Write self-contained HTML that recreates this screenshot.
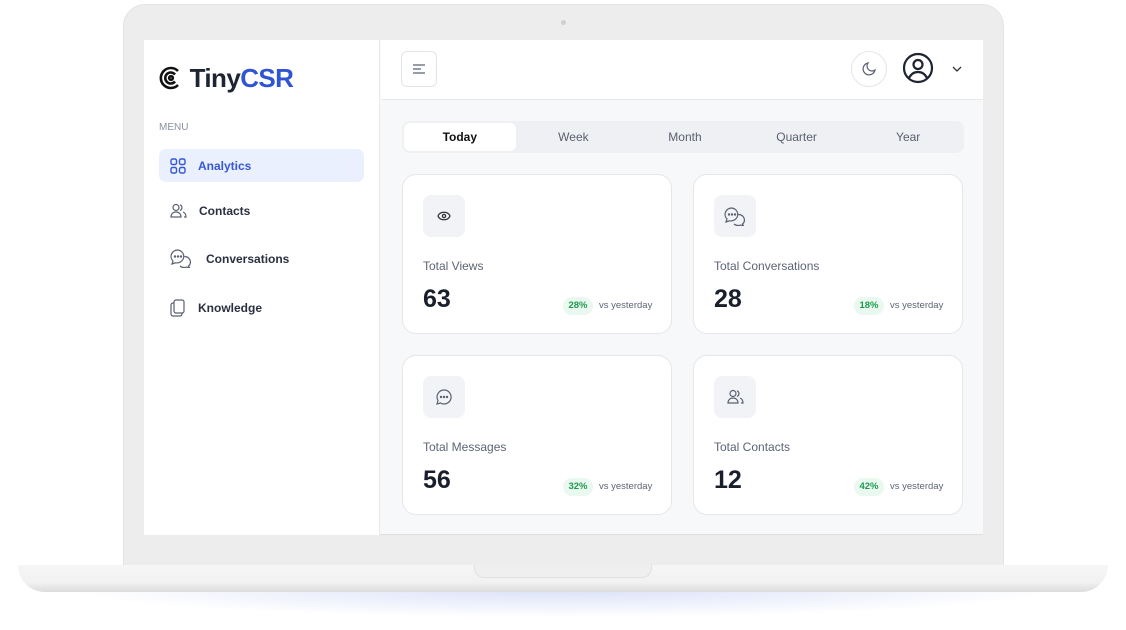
<!DOCTYPE html>
<html><head><meta charset="utf-8"><style>
*{box-sizing:border-box;margin:0;padding:0}
body{width:1126px;height:630px;background:#fff;position:relative;overflow:hidden;font-family:"Liberation Sans",sans-serif;color:#1f2433}
.bezel{position:absolute;left:123px;top:4px;width:881px;height:570px;background:#ededed;border-radius:22px 22px 0 0;border:1px solid #e4e4e4}
.cam{position:absolute;left:561px;top:20px;width:5px;height:5px;border-radius:50%;background:#cfcfcf}
.screen{position:absolute;left:144px;top:40px;width:839px;height:495px;background:#f7f8fa;border-bottom:1px solid #e0e0e0}
.side{position:absolute;left:0;top:0;width:236px;height:495px;background:#fff;border-right:1px solid #e8eaee}
.head{position:absolute;left:237px;top:0;width:602px;height:60px;background:#fff;border-bottom:1px solid #e8eaee}
.base{position:absolute;left:18px;top:565px;width:1090px;height:27px;background:linear-gradient(#f6f6f6,#f1f1f1 65%,#dcdcdc);border-radius:0 0 30px 30px}
.notch{position:absolute;left:474px;top:565px;width:178px;height:13px;background:#efefef;border:1px solid #e0e0e0;border-top:none;border-radius:0 0 10px 10px}
.shadow{position:absolute;left:60px;top:588px;width:1006px;height:30px;background:radial-gradient(ellipse at center top,rgba(170,185,240,.45),rgba(200,210,250,0) 70%)}
.logo{position:absolute;left:15px;top:23px;font-size:26px;font-weight:bold;letter-spacing:-.6px}
.menu{position:absolute;left:15px;top:82px;font-size:10px;color:#8a90a0}
.item{position:absolute;left:15px;width:205px;height:33px;font-size:12px;font-weight:bold;color:#2a3040;display:flex;align-items:center}
.item svg{margin-left:11px;margin-right:12px}
.tabs{position:absolute;left:258px;top:81px;width:562px;height:32px;background:#eef0f4;border-radius:8px;display:flex}
.tabs div{flex:1;text-align:center;line-height:32px;font-size:12px;color:#5a6070}
.tabs .on{background:#fff;color:#111;font-weight:bold;border-radius:6px;margin:2px;line-height:28px}
.card{position:absolute;width:270px;height:160px;background:#fff;border:1px solid #e4e6ea;border-radius:14px}
.ic{position:absolute;left:20px;top:20px;width:42px;height:42px;background:#f1f3f6;border-radius:8px;display:flex;align-items:center;justify-content:center}
.lbl{position:absolute;left:20px;top:84px;font-size:12px;color:#5d6474}
.num{position:absolute;left:20px;top:110px;font-size:25px;font-weight:bold;color:#1a1f2c}
.pct{position:absolute;left:160px;top:122px;width:30px;height:18px;border-radius:9px;background:#e9f9ef;color:#1f9a4d;font-size:9.5px;font-weight:bold;text-align:center;line-height:18px}
.vs{position:absolute;left:196px;top:125px;font-size:9.5px;color:#5d6474}
</style></head><body>
<div class="shadow"></div>
<div class="bezel"></div>
<div class="cam"></div>
<div class="base"></div>
<div class="notch"></div>
<div class="screen">
 <div class="side">
  <div class="logo"><svg width="24" height="24" viewBox="0 0 24 24" style="vertical-align:-3px" fill="none" stroke="#111" stroke-width="2.6"><path d="M19 5A10 10 0 1 0 19 19"/><path d="M16 8.5A5.5 5.5 0 1 0 16 15.5"/><circle cx="12" cy="12" r="1.8"/></svg> Tiny<span style="color:#2f55d4">CSR</span></div>
  <div class="menu">MENU</div>
  <div class="item" style="top:109px;background:#eaf0fd;border-radius:7px;color:#3557d8"><svg width="16" height="16" viewBox="0 0 16 16" fill="none" stroke="#3557d8" stroke-width="1.4"><rect x="1" y="1" width="5.5" height="5.5" rx="1.5"/><rect x="9.5" y="1" width="5.5" height="5.5" rx="1.5"/><rect x="1" y="9.5" width="5.5" height="5.5" rx="1.5"/><rect x="9.5" y="9.5" width="5.5" height="5.5" rx="1.5"/></svg>Analytics</div>
  <div class="item" style="top:154px"><svg width="17" height="16" viewBox="0 0 17 16" fill="none" stroke="#5a6070" stroke-width="1.2"><circle cx="6" cy="4.5" r="3"/><path d="M1 14c0-3 2-5 5-5s5 2 5 5z"/><path d="M10 1.8a3 3 0 0 1 0 5.6M13 9c2 .8 3 2.6 3 5h-2"/></svg>Contacts</div>
  <div class="item" style="top:202px"><svg width="22" height="19" viewBox="0 0 22 19" fill="none" stroke="#5a6070" stroke-width="1.2"><path d="M8 1a7 6.5 0 0 0-5 11l-1 3 3.5-1.2A7 6.5 0 1 0 8 1z"/><path d="M14.5 7.5a6 5.5 0 0 1 4 9.5l1 1.8-3-.8a6 5.5 0 0 1-6.5-1"/><circle cx="5" cy="7.5" r=".6" fill="#5a6070"/><circle cx="8" cy="7.5" r=".6" fill="#5a6070"/><circle cx="11" cy="7.5" r=".6" fill="#5a6070"/></svg><span style="margin-left:2px">Conversations</span></div>
  <div class="item" style="top:251px"><svg width="16" height="18" viewBox="0 0 16 18" fill="none" stroke="#5a6070" stroke-width="1.2"><rect x="4" y="1" width="10" height="13" rx="2"/><path d="M4 4H3a2 2 0 0 0-2 2v9a2 2 0 0 0 2 2h7a2 2 0 0 0 2-2v-1"/></svg>Knowledge</div>
 </div>
 <div class="head">
  <div style="position:absolute;left:20px;top:11px;width:36px;height:36px;border:1px solid #e2e4e8;border-radius:6px;display:flex;align-items:center;justify-content:center"><svg width="14" height="12" viewBox="0 0 14 12" stroke="#5a6070" stroke-width="1.3"><path d="M1 2h12M1 6h8M1 10h12"/></svg></div>
  <div style="position:absolute;left:470px;top:11px;width:36px;height:36px;border:1px solid #e4e6ea;border-radius:50%;display:flex;align-items:center;justify-content:center"><svg width="16" height="16" viewBox="0 0 16 16" fill="none" stroke="#5a6070" stroke-width="1.2"><path d="M7 2a6 6 0 1 0 7 7A5 5 0 0 1 7 2z"/></svg></div>
  <svg style="position:absolute;left:521px;top:12px" width="32" height="32" viewBox="0 0 32 32" fill="none" stroke="#1f2433" stroke-width="2.2"><circle cx="16" cy="16" r="14"/><circle cx="16" cy="12.5" r="4.5"/><path d="M7 26c2-4 5-6 9-6s7 2 9 6"/></svg>
  <svg style="position:absolute;left:571px;top:26px" width="10" height="6" viewBox="0 0 10 6" fill="none" stroke="#333" stroke-width="1.3"><path d="M1 1l4 4 4-4"/></svg>
 </div>
 <div class="tabs"><div class="on">Today</div><div>Week</div><div>Month</div><div>Quarter</div><div>Year</div></div>
 <div class="card" style="left:258px;top:134px"><div class="ic"><svg width="14" height="10" viewBox="0 0 14 10" fill="none" stroke="#333" stroke-width="1.3"><path d="M1 5c2-5 10-5 12 0-2 5-10 5-12 0z"/><circle cx="7" cy="5" r="1.6"/></svg></div><div class="lbl">Total Views</div><div class="num">63</div><div class="pct">28%</div><div class="vs">vs yesterday</div></div>
 <div class="card" style="left:549px;top:134px"><div class="ic"><svg width="22" height="19" viewBox="0 0 22 19" fill="none" stroke="#5a6070" stroke-width="1.2"><path d="M8 1a7 6.5 0 0 0-5 11l-1 3 3.5-1.2A7 6.5 0 1 0 8 1z"/><path d="M14.5 7.5a6 5.5 0 0 1 4 9.5l1 1.8-3-.8a6 5.5 0 0 1-6.5-1"/><circle cx="5" cy="7.5" r=".6" fill="#5a6070"/><circle cx="8" cy="7.5" r=".6" fill="#5a6070"/><circle cx="11" cy="7.5" r=".6" fill="#5a6070"/></svg></div><div class="lbl">Total Conversations</div><div class="num">28</div><div class="pct">18%</div><div class="vs">vs yesterday</div></div>
 <div class="card" style="left:258px;top:315px"><div class="ic"><svg width="16" height="16" viewBox="0 0 16 16" fill="none" stroke="#5a6070" stroke-width="1.2"><path d="M8 1a7 7 0 0 0-6 10.5L1 15l3.5-1A7 7 0 1 0 8 1z"/><circle cx="5" cy="8" r=".6" fill="#5a6070"/><circle cx="8" cy="8" r=".6" fill="#5a6070"/><circle cx="11" cy="8" r=".6" fill="#5a6070"/></svg></div><div class="lbl">Total Messages</div><div class="num">56</div><div class="pct">32%</div><div class="vs">vs yesterday</div></div>
 <div class="card" style="left:549px;top:315px"><div class="ic"><svg width="17" height="16" viewBox="0 0 17 16" fill="none" stroke="#5a6070" stroke-width="1.2"><circle cx="6" cy="4.5" r="3"/><path d="M1 14c0-3 2-5 5-5s5 2 5 5z"/><path d="M10 1.8a3 3 0 0 1 0 5.6M13 9c2 .8 3 2.6 3 5h-2"/></svg></div><div class="lbl">Total Contacts</div><div class="num">12</div><div class="pct">42%</div><div class="vs">vs yesterday</div></div>
</div>
</body></html>
